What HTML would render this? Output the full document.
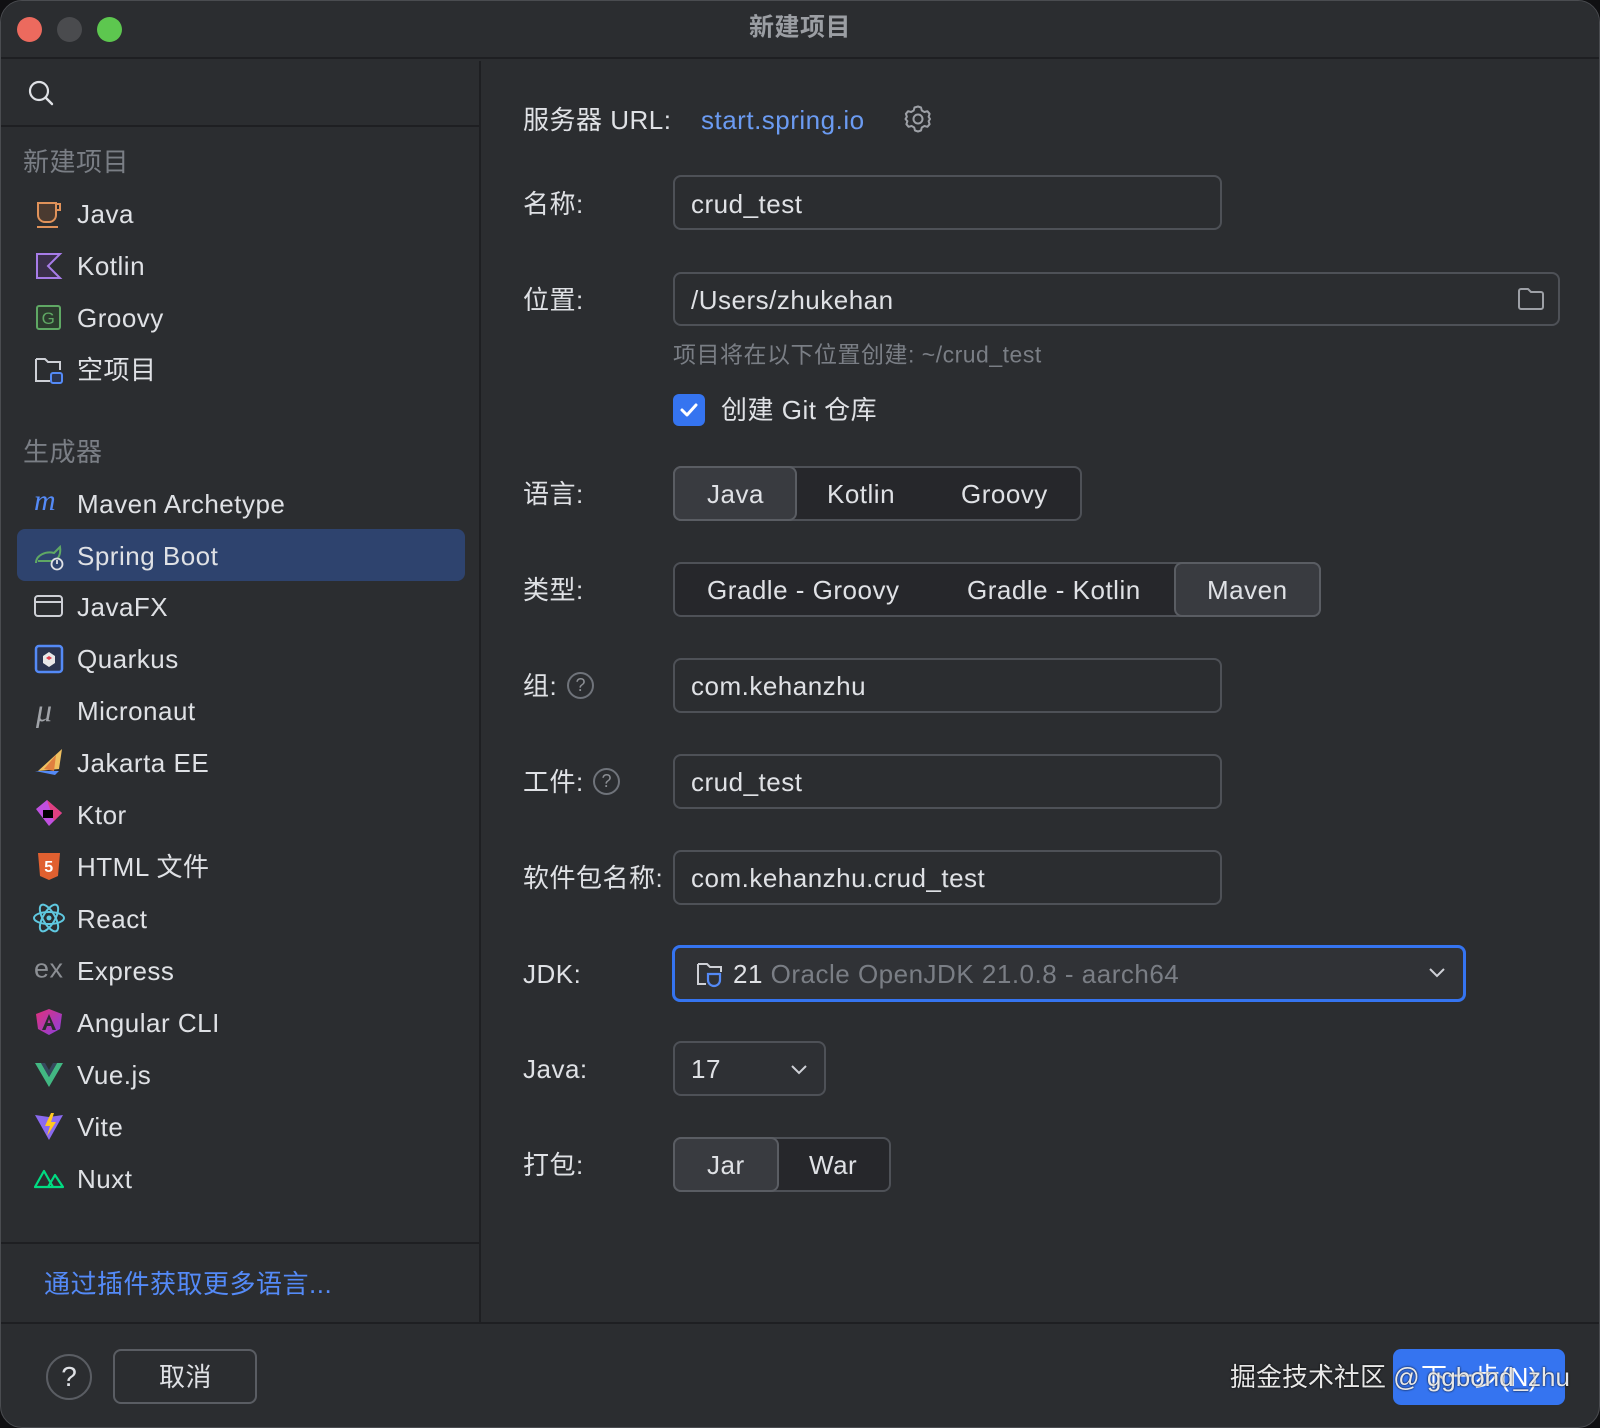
<!DOCTYPE html>
<html><head><meta charset="utf-8">
<style>
*{box-sizing:border-box;margin:0;padding:0}
html,body{width:1600px;height:1428px;background:#101012;overflow:hidden}
body{font-family:"Liberation Sans","Noto Sans CJK SC",sans-serif;color:#dfe1e5;font-size:26px;letter-spacing:0.5px}
#win{position:absolute;left:0;top:0;width:1600px;height:1428px;background:#2b2d30;border-radius:22px;overflow:hidden;border:1px solid #4a4c50}
.a{position:absolute}
.t{position:absolute;line-height:1;transform:translateY(-50%);white-space:nowrap}
.box{position:absolute;border:2px solid #4e5157;border-radius:8px;background:#2b2d30}
.seg{position:absolute;border:2px solid #4e5157;border-radius:8px;background:#26272b}
.sel{position:absolute;border:2px solid #5a5d63;border-radius:8px;background:#393b40}
.lbl{left:522px}
.gray{color:#7a7e85}
.ic{position:absolute;left:33px;width:30px;height:30px}
</style></head><body>
<div id="win">
 <div class="a" style="left:0;top:0;width:1600px;height:58px;background:#2b2d30;border-bottom:2px solid #1e1f22"></div>
 <div class="a" style="left:16px;top:16px;width:25px;height:25px;border-radius:50%;background:#ec6a5e"></div>
 <div class="a" style="left:56px;top:16px;width:25px;height:25px;border-radius:50%;background:#4a4b4e"></div>
 <div class="a" style="left:96px;top:16px;width:25px;height:25px;border-radius:50%;background:#5dc74f"></div>
 <div class="t" style="left:748px;top:27px;font-weight:bold;color:#9b9ea3;font-size:25px">新建项目</div>

 <div class="a" style="left:0;top:60px;width:480px;height:1262px;background:#2b2d30;border-right:2px solid #1e1f22"></div>
 <div class="a" style="left:0;top:124px;width:480px;height:2px;background:#1e1f22"></div>
 <svg class="a" style="left:26px;top:78px" width="28" height="28" viewBox="0 0 28 28"><circle cx="12" cy="12" r="9" fill="none" stroke="#dfe1e5" stroke-width="2.2"/><path d="M18.5 18.5L25 25" stroke="#dfe1e5" stroke-width="2.4" stroke-linecap="round"/></svg>
 <div class="t gray" style="left:22px;top:161px">新建项目</div>

 <svg class="ic" style="top:199px" viewBox="0 0 30 30"><path d="M4 3h18v12a7 7 0 0 1-7 7h-4a7 7 0 0 1-7-7z" fill="#4a3a30" stroke="#e0925a" stroke-width="2"/><path d="M22 4h4v6h-4" fill="none" stroke="#e0925a" stroke-width="2"/><path d="M3 27h21" stroke="#e0925a" stroke-width="2"/></svg>
 <div class="t" style="left:76px;top:213px">Java</div>
 <svg class="ic" style="top:250px" viewBox="0 0 30 30"><path d="M3 3h23l-12 12 12 12H3z" fill="#3a2f4a" stroke="#a77ce8" stroke-width="2"/></svg>
 <div class="t" style="left:76px;top:265px">Kotlin</div>
 <svg class="ic" style="top:302px" viewBox="0 0 30 30"><rect x="3" y="3" width="23" height="23" rx="2" fill="#2c3b2e" stroke="#5fa864" stroke-width="2"/><text x="14.5" y="21" font-size="17" text-anchor="middle" fill="#5fa864" font-family="Liberation Sans">G</text></svg>
 <div class="t" style="left:76px;top:317px">Groovy</div>
 <svg class="ic" style="top:354px" viewBox="0 0 30 30"><path d="M2 4h9l3 3h12v8M2 4v22h14" fill="none" stroke="#ced0d6" stroke-width="2"/><rect x="17" y="18" width="11" height="10" rx="2" fill="#2b3550" stroke="#548af7" stroke-width="2"/></svg>
 <div class="t" style="left:76px;top:369px">空项目</div>

 <div class="t gray" style="left:22px;top:451px">生成器</div>
 <div class="t" style="left:33px;top:500px;color:#548af7;font-style:italic;font-size:30px;font-family:'Liberation Serif',serif">m</div>
 <div class="t" style="left:76px;top:503px">Maven Archetype</div>
 <div class="a" style="left:16px;top:528px;width:448px;height:52px;border-radius:8px;background:#2e436e"></div>
 <svg class="ic" style="top:540px" viewBox="0 0 30 30"><path d="M2 22c0-8 10-12 18-10l6-6c1 6-1 12-6 14H4" fill="none" stroke="#5fa864" stroke-width="2"/><circle cx="23" cy="23" r="5.5" fill="#2e436e" stroke="#dfe1e5" stroke-width="1.8"/><path d="M23 19v4" stroke="#dfe1e5" stroke-width="1.8"/></svg>
 <div class="t" style="left:76px;top:555px">Spring Boot</div>
 <svg class="ic" style="top:591px" viewBox="0 0 30 30"><rect x="1" y="4" width="27" height="20" rx="3" fill="none" stroke="#ced0d6" stroke-width="2"/><path d="M1 10h27" stroke="#ced0d6" stroke-width="2"/></svg>
 <div class="t" style="left:76px;top:606px">JavaFX</div>
 <svg class="ic" style="top:643px" viewBox="0 0 30 30"><rect x="2" y="2" width="26" height="26" rx="3" fill="#2b3550" stroke="#548af7" stroke-width="2.5"/><path d="M15 8l6 4v7l-6 4-6-4v-7z" fill="#e8e8e8"/><path d="M15 12l3 2-3 2-3-2z" fill="#e04050"/></svg>
 <div class="t" style="left:76px;top:658px">Quarkus</div>
 <div class="t" style="left:35px;top:709px;color:#a0a3a8;font-size:32px;font-style:italic;font-family:'Liberation Serif',serif">μ</div>
 <div class="t" style="left:76px;top:710px">Micronaut</div>
 <svg class="ic" style="top:746px" viewBox="0 0 30 30"><path d="M4 24L28 2 25 22z" fill="#f0c060"/><path d="M10 22L22 8 20 24z" fill="#e08040"/><path d="M1 24h24l-4 4z" fill="#548af7"/></svg>
 <div class="t" style="left:76px;top:762px">Jakarta EE</div>
 <svg class="ic" style="top:797px" viewBox="0 0 30 30"><path d="M2 11L13 2l15 13-13 13z" fill="#c050e0"/><path d="M13 2l15 13-8 8" fill="#e04080"/><rect x="9" y="12" width="10" height="8" fill="#000"/></svg>
 <div class="t" style="left:76px;top:814px">Ktor</div>
 <svg class="ic" style="top:850px" viewBox="0 0 30 30"><path d="M4 2h22l-2 23-9 4-9-4z" fill="#e06030"/><text x="15" y="21" font-size="16" font-weight="bold" text-anchor="middle" fill="#fff" font-family="Liberation Sans">5</text></svg>
 <div class="t" style="left:76px;top:866px">HTML 文件</div>
 <svg class="ic" style="top:902px;left:31px;width:34px" viewBox="0 0 34 30"><g fill="none" stroke="#5fc8e0" stroke-width="2"><ellipse cx="17" cy="15" rx="15" ry="6"/><ellipse cx="17" cy="15" rx="15" ry="6" transform="rotate(60 17 15)"/><ellipse cx="17" cy="15" rx="15" ry="6" transform="rotate(-60 17 15)"/></g><circle cx="17" cy="15" r="2.5" fill="#5fc8e0"/></svg>
 <div class="t" style="left:76px;top:918px">React</div>
 <div class="t" style="left:33px;top:968px;color:#8c8f94;font-size:27px">ex</div>
 <div class="t" style="left:76px;top:970px">Express</div>
 <svg class="ic" style="top:1006px" viewBox="0 0 30 30"><defs><linearGradient id="ag" x1="0" y1="0" x2="1" y2="1"><stop offset="0" stop-color="#e0307a"/><stop offset="1" stop-color="#8a40e0"/></linearGradient></defs><path d="M15 2L28 7l-2 15-11 6-11-6L2 7z" fill="url(#ag)"/><path d="M15 7l7 16h-3.5l-1.5-4h-4l-1.5 4H8zM15 12l-1.5 4h3z" fill="#2b2d30" fill-rule="evenodd"/></svg>
 <div class="t" style="left:76px;top:1022px">Angular CLI</div>
 <svg class="ic" style="top:1059px" viewBox="0 0 30 30"><path d="M1 3h6l8 14 8-14h6L15 27z" fill="#42b883"/><path d="M7 3h4l4 7 4-7h4L15 17z" fill="#35495e"/></svg>
 <div class="t" style="left:76px;top:1074px">Vue.js</div>
 <svg class="ic" style="top:1110px" viewBox="0 0 30 30"><path d="M1 4l14 2 14-2-14 25z" fill="#8a6af0"/><path d="M17 2l-6 13h5l-3 10 9-14h-5l3-9z" fill="#ffc820"/></svg>
 <div class="t" style="left:76px;top:1126px">Vite</div>
 <svg class="ic" style="top:1164px" viewBox="0 0 30 30"><path d="M1 22L10 6l9 16H1zM14 22l7-12 8 12z" fill="none" stroke="#00dc82" stroke-width="2.2" stroke-linejoin="round"/></svg>
 <div class="t" style="left:76px;top:1178px">Nuxt</div>

 <div class="a" style="left:0;top:1241px;width:480px;height:2px;background:#1e1f22"></div>
 <div class="t" style="left:43px;top:1283px;color:#548af7">通过插件获取更多语言...</div>

 <div class="t lbl" style="top:119px">服务器 URL:</div>
 <div class="t" style="left:700px;top:119px;color:#6b9bf2">start.spring.io</div>
 <svg class="a" style="left:902px;top:103px" width="30" height="30" viewBox="0 0 30 30"><circle cx="15" cy="15" r="4.5" fill="none" stroke="#9da0a6" stroke-width="2"/><path d="M15 2.5l3 1 .8 3 2.6 1.5 3-.8 2.2 2.6-1 3 1.4 2.2-1.4 2.2 1 3-2.2 2.6-3-.8-2.6 1.5-.8 3-3 1-3-1-.8-3-2.6-1.5-3 .8-2.2-2.6 1-3L2.5 15l1.4-2.2-1-3L5.1 7.2l3 .8L10.7 6.5l.8-3z" fill="none" stroke="#9da0a6" stroke-width="2" stroke-linejoin="round"/></svg>

 <div class="t lbl" style="top:203px">名称:</div>
 <div class="box" style="left:672px;top:174px;width:549px;height:55px"></div>
 <div class="t" style="left:690px;top:203px">crud_test</div>

 <div class="t lbl" style="top:299px">位置:</div>
 <div class="box" style="left:672px;top:271px;width:887px;height:54px"></div>
 <div class="t" style="left:690px;top:299px">/Users/zhukehan</div>
 <svg class="a" style="left:1516px;top:286px" width="28" height="24" viewBox="0 0 28 24"><path d="M2 4a2 2 0 0 1 2-2h7l3 3h10a2 2 0 0 1 2 2v13a2 2 0 0 1-2 2H4a2 2 0 0 1-2-2z" fill="none" stroke="#9da0a6" stroke-width="2"/></svg>
 <div class="t gray" style="left:672px;top:354px;font-size:23px">项目将在以下位置创建: ~/crud_test</div>

 <div class="a" style="left:672px;top:393px;width:32px;height:32px;border-radius:6px;background:#3574f0"></div>
 <svg class="a" style="left:676px;top:397px" width="24" height="24" viewBox="0 0 24 24"><path d="M5 12l5 5 9-10" fill="none" stroke="#fff" stroke-width="3" stroke-linecap="round" stroke-linejoin="round"/></svg>
 <div class="t" style="left:720px;top:409px">创建 Git 仓库</div>

 <div class="t lbl" style="top:493px">语言:</div>
 <div class="seg" style="left:672px;top:465px;width:409px;height:55px"></div>
 <div class="sel" style="left:672px;top:465px;width:124px;height:55px"></div>
 <div class="t" style="left:706px;top:493px">Java</div>
 <div class="t" style="left:826px;top:493px">Kotlin</div>
 <div class="t" style="left:960px;top:493px">Groovy</div>

 <div class="t lbl" style="top:589px">类型:</div>
 <div class="seg" style="left:672px;top:561px;width:648px;height:55px"></div>
 <div class="sel" style="left:1173px;top:561px;width:147px;height:55px"></div>
 <div class="t" style="left:706px;top:589px">Gradle - Groovy</div>
 <div class="t" style="left:966px;top:589px">Gradle - Kotlin</div>
 <div class="t" style="left:1206px;top:589px">Maven</div>

 <div class="t lbl" style="top:685px">组:</div>
 <div class="a" style="left:566px;top:671px;width:27px;height:27px;border:2px solid #6f737a;border-radius:50%;color:#8c8f94;font-size:18px;text-align:center;line-height:23px;letter-spacing:0">?</div>
 <div class="box" style="left:672px;top:657px;width:549px;height:55px"></div>
 <div class="t" style="left:690px;top:685px">com.kehanzhu</div>

 <div class="t lbl" style="top:781px">工件:</div>
 <div class="a" style="left:592px;top:767px;width:27px;height:27px;border:2px solid #6f737a;border-radius:50%;color:#8c8f94;font-size:18px;text-align:center;line-height:23px;letter-spacing:0">?</div>
 <div class="box" style="left:672px;top:753px;width:549px;height:55px"></div>
 <div class="t" style="left:690px;top:781px">crud_test</div>

 <div class="t lbl" style="top:877px">软件包名称:</div>
 <div class="box" style="left:672px;top:849px;width:549px;height:55px"></div>
 <div class="t" style="left:690px;top:877px">com.kehanzhu.crud_test</div>

 <div class="t lbl" style="top:973px">JDK:</div>
 <div class="a" style="left:671px;top:944px;width:794px;height:57px;border:3px solid #3574f0;border-radius:8px;background:#303236"></div>
 <svg class="a" style="left:694px;top:958px" width="32" height="32" viewBox="0 0 32 32"><path d="M3 5h9l3 3h11v5M3 5v20h8" fill="none" stroke="#ced0d6" stroke-width="2"/><path d="M13 15h12v6a6 6 0 0 1-12 0z" fill="none" stroke="#548af7" stroke-width="2.2"/></svg>
 <div class="t" style="left:732px;top:973px"><span style="color:#dfe1e5">21</span> <span class="gray">Oracle OpenJDK 21.0.8 - aarch64</span></div>
 <svg class="a" style="left:1426px;top:964px" width="20" height="14" viewBox="0 0 20 14"><path d="M3 4l7 7 7-7" fill="none" stroke="#ced0d6" stroke-width="2"/></svg>

 <div class="t lbl" style="top:1068px">Java:</div>
 <div class="box" style="left:672px;top:1040px;width:153px;height:55px;background:#2e3034"></div>
 <div class="t" style="left:690px;top:1068px">17</div>
 <svg class="a" style="left:788px;top:1061px" width="20" height="14" viewBox="0 0 20 14"><path d="M3 4l7 7 7-7" fill="none" stroke="#ced0d6" stroke-width="2"/></svg>

 <div class="t lbl" style="top:1164px">打包:</div>
 <div class="seg" style="left:672px;top:1136px;width:218px;height:55px"></div>
 <div class="sel" style="left:672px;top:1136px;width:106px;height:55px"></div>
 <div class="t" style="left:706px;top:1164px">Jar</div>
 <div class="t" style="left:808px;top:1164px">War</div>

 <div class="a" style="left:0;top:1321px;width:1600px;height:2px;background:#1e1f22"></div>
 <div class="a" style="left:45px;top:1353px;width:46px;height:46px;border:2px solid #5a5d63;border-radius:50%;text-align:center;line-height:42px;font-size:28px;color:#dfe1e5;letter-spacing:0">?</div>
 <div class="a" style="left:112px;top:1348px;width:144px;height:55px;border:2px solid #5a5d63;border-radius:8px"></div>
 <div class="t" style="left:158px;top:1376px">取消</div>
 <div class="a" style="left:1392px;top:1348px;width:172px;height:56px;border-radius:8px;background:#3574f0"></div>
 <div class="t" style="left:1420px;top:1376px;color:#fff">下一步(N)</div>
 <div class="t" style="left:1229px;top:1376px;color:#e8e8e8;text-shadow:0 0 2px #000;letter-spacing:0">掘金技术社区 @ ggbond_zhu</div>
</div>
</body></html>
